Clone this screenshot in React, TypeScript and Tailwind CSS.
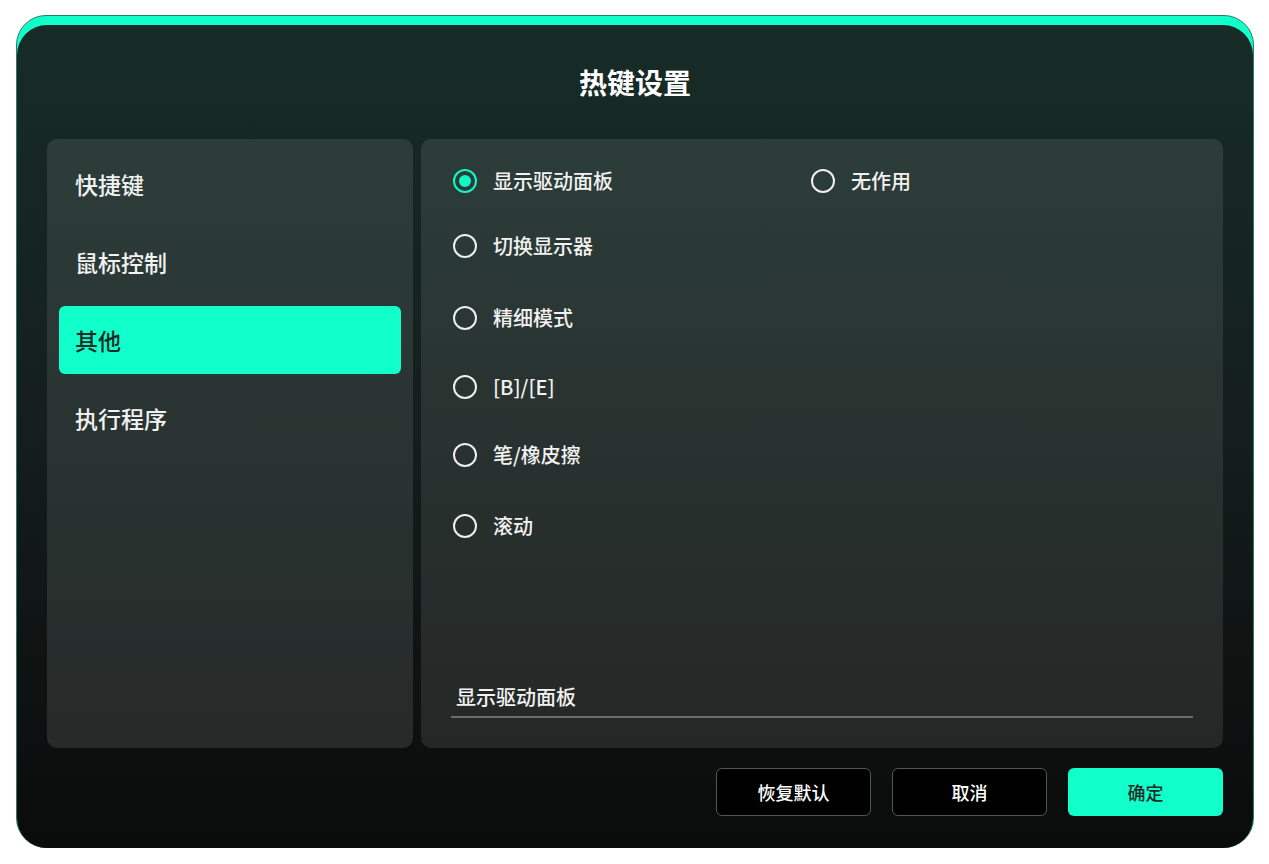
// Hotkey settings dialog — "其他" tab with radio options for the pen button action.

const font = { fontFamily: '"Noto Sans CJK SC", Inter, "Liberation Sans", sans-serif' };

const tabs = ["快捷键", "鼠标控制", "其他", "执行程序"];
const options = [
  { label: "显示驱动面板", mt: "mt-0" },
  { label: "切换显示器", mt: "mt-[29px]" },
  { label: "精细模式", mt: "mt-[36px]" },
  { label: "[B]/[E]", mt: "mt-[33px]" },
  { label: "笔/橡皮擦", mt: "mt-[32px]" },
  { label: "滚动", mt: "mt-[35px]" },
];

function Radio({ checked }: { checked?: boolean }) {
  return checked ? (
    <span className="flex h-6 w-6 shrink-0 items-center justify-center rounded-full border-2 border-[#12f7c6]">
      <span className="h-[12px] w-[12px] rounded-full bg-[#12f7c6]" />
    </span>
  ) : (
    <span className="h-6 w-6 shrink-0 rounded-full border-2 border-[#eeeeee]" />
  );
}

function Option({ label, checked, className = "" }: { label: string; checked?: boolean; className?: string }) {
  return (
    <div className={`flex h-9 items-center gap-4 ${className}`}>
      <Radio checked={checked} />
      <span className="text-[20px] font-medium text-[#f2f2f2]">{label}</span>
    </div>
  );
}

export default function App() {
  return (
    <div className="min-h-[864px] bg-white pt-[15px] pl-[16px]" style={font}>
      <div className="h-[833px] w-[1238px] rounded-[30px] border border-[#2c7a66] bg-[#10ffcb]">
        <div className="mt-[9px] flex h-[823px] flex-col rounded-[30px] bg-gradient-to-b from-[#172c27] via-[#141e1c] to-[#0a0b0b] px-[30px]">
          <h1 className="mt-[39px] text-center text-[28px] font-bold leading-9 text-white">热键设置</h1>

          <div className="mt-[39px] flex h-[609px] gap-2">
            <nav className="flex w-[366px] flex-col gap-[10px] rounded-[10px] bg-gradient-to-b from-[#2c3d39] to-[#262a29] px-3 pt-[11px]">
              {tabs.map((t) => (
                <div
                  key={t}
                  className={
                    t === "其他"
                      ? "flex h-[68px] items-center rounded-[6px] bg-[#10ffcb] px-[16px] text-[23px] font-medium text-[#1b2c28]"
                      : "flex h-[68px] items-center px-[16px] text-[23px] font-medium text-[#f2f2f2]"
                  }
                >
                  {t}
                </div>
              ))}
            </nav>

            <section className="flex flex-1 flex-col rounded-[10px] bg-gradient-to-b from-[#2c3d39] to-[#242726] px-[30px] pt-[24px] pb-[30px]">
              <div className="flex pl-[2px]">
                <div className="flex w-[358px] flex-col">
                  {options.map((o, i) => (
                    <Option key={o.label} label={o.label} checked={i === 0} className={o.mt} />
                  ))}
                </div>
                <div className="flex flex-col">
                  <Option label="无作用" />
                </div>
              </div>

              <div className="mt-auto border-b-2 border-[#6a6c6b] pb-[4px] pl-[5px] text-[20px] font-medium text-[#f2f2f2]">
                显示驱动面板
              </div>
            </section>
          </div>

          <div className="mt-5 flex justify-end gap-[21px]">
            <button className="h-12 w-[155px] rounded-[6px] border border-[#555] bg-black text-[18px] font-medium text-white">
              恢复默认
            </button>
            <button className="h-12 w-[155px] rounded-[6px] border border-[#555] bg-black text-[18px] font-medium text-white">
              取消
            </button>
            <button className="h-12 w-[155px] rounded-[6px] bg-[#10ffcb] text-[18px] font-medium text-[#1b2c28]">
              确定
            </button>
          </div>
        </div>
      </div>
    </div>
  );
}
